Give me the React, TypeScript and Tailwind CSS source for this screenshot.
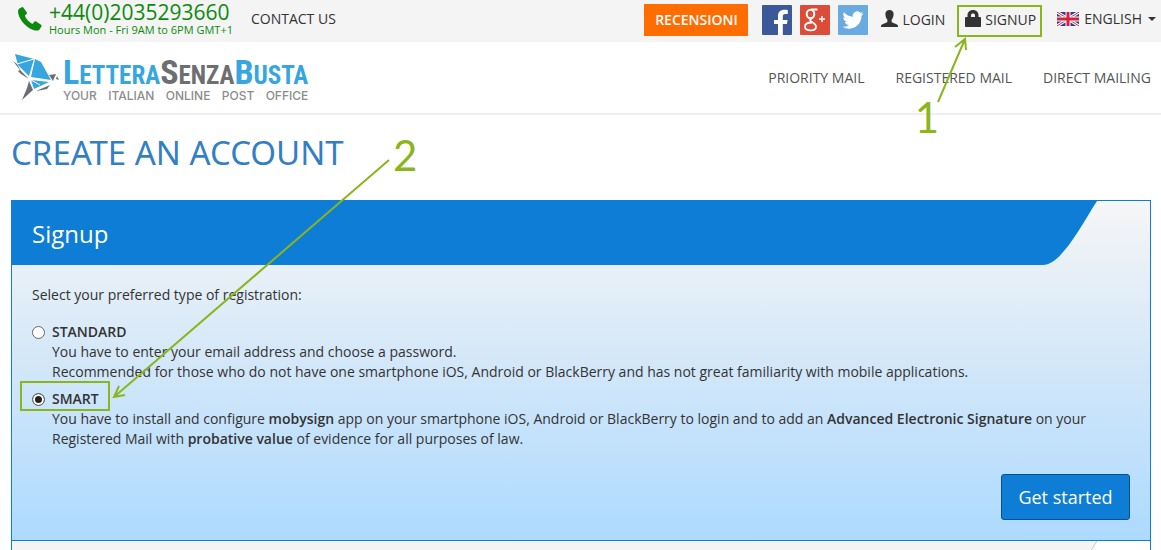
import type { ReactNode } from "react";

function PhoneIcon() {
  return (
    <svg viewBox="0 0 24 24" className="size-6" fill="#0d8a0d" aria-hidden="true">
      <path d="M3.800.2 1.400 1.400C.2 2.100-.2 4 .2 6.200c.7 3.700 2.900 7.600 6 10.800 3.300 3.300 7 5.600 10.600 6.400 2.300.5 4 .1 4.700-1l1.900-2.900c.4-.7.2-1.300-.4-1.700l-4.900-3.300c-.6-.4-1.200-.3-1.700.2l-2 2.200c-3.400-1.700-6.600-5.100-7.600-8.400l1.700-1.500c.5-.4.6-1 .4-1.600L5.600 1C5.200.3 4.500-.1 3.800.2Z" />
    </svg>
  );
}

function BirdLogo() {
  return (
    <svg viewBox="0 0 46 46" className="w-[46px] h-[46px] shrink-0" aria-hidden="true">
      <path fill="#6d6e71" d="M0 7 4 10 8 17 16 25 8 20 5 17 7 16ZM36 21 43 20 40 27 38 24ZM43 25 46 26 44 22ZM16 27 20 36 9 46 14 34ZM23 37 37 31 34 35 29 36Z" />
      <path fill="#37a5df" d="M2 0 21 5 16 22 5 11ZM22 5 28 8 38 26 18 23ZM18 26 36 28 21 35Z" />
      <path stroke="#fff" fill="none" d="M4 10 21 5M18 26 27 31" />
    </svg>
  );
}

function Flag() {
  return (
    <svg viewBox="0 0 22 14" className="w-[22px] h-[14px]" aria-hidden="true">
      <path fill="#26428b" d="M0 0h22v14H0z" />
      <path stroke="#fff" strokeWidth="3" d="m0 0 22 14M22 0 0 14" />
      <path stroke="#d4213d" strokeWidth="1" d="m0 0 22 14M22 0 0 14" />
      <path stroke="#fff" strokeWidth="5" d="M11 0v14M0 7h22" />
      <path stroke="#d4213d" strokeWidth="3" d="M11 0v14M0 7h22" />
    </svg>
  );
}

function TopBar() {
  return (
    <div className="relative h-[42px] bg-[#f4f4f4] flex items-start justify-between pl-[18px] pr-[5px]">
      <div className="flex">
        <span className="pt-[7px]">
          <PhoneIcon />
        </span>
        <div className="ml-[7px] text-[#0d8a0d]">
          <a href="tel:+442035293660" className="block text-[21px] leading-6">+44(0)2035293660</a>
          <p className="text-[11px] leading-3">Hours Mon - Fri 9AM to 6PM GMT+1</p>
        </div>
        <a href="#contact" className="ml-[18px] pt-[9px]">CONTACT US</a>
      </div>

      <div className="flex">
        <a href="#reviews" className="mt-1 h-8 w-[104px] bg-[#ff6c00] text-white font-semibold leading-8 text-center">
          RECENSIONI
        </a>
        <div className="ml-[14px] mt-[5px] flex gap-2">
          <a href="#facebook" aria-label="Facebook">
            <svg viewBox="0 0 30 30" className="size-[30px]">
              <rect width="30" height="30" rx="1" fill="#3b5998" />
              <path fill="#fff" d="M16 30V19h-4v-4h4v-4c0-4 2.500-6.200 6.200-6.200 1.700 0 3.100.1 3.600.2V9h-2.500c-2 0-2.500 1-2.500 2.400V15h4.800l-.7 4h-4.100v11Z" />
            </svg>
          </a>
          <a href="#google" aria-label="Google Plus">
            <svg viewBox="0 0 30 30" className="size-[30px]">
              <rect width="30" height="30" rx="1" fill="#dd4b39" />
              <g fill="none" stroke="#fff">
                <ellipse cx="10.500" cy="9" rx="3.800" ry="4.300" strokeWidth="2" />
                <path strokeWidth="1.800" d="M11 4.500h6.500M11.500 13.300c-2 1.700-1.500 2.500 0 3.400 2.600 1.500 4.500 2.600 4.500 4.700 0 2.600-2.500 4-5.500 4S5 24 5 21.600s2.500-4.100 7-4.100" />
                <path strokeWidth="1.500" d="M22 11v6M19 14h6" />
              </g>
            </svg>
          </a>
          <a href="#twitter" aria-label="Twitter">
            <svg viewBox="0 0 30 30" className="size-[30px]">
              <rect width="30" height="30" rx="1" fill="#69abe0" />
              <path
                fill="#fff"
                transform="translate(4.500 4.500) scale(.88)"
                d="M23.950 4.570a10 10 0 0 1-2.820.770 4.960 4.960 0 0 0 2.160-2.720c-.95.560-2 .960-3.130 1.180a4.920 4.920 0 0 0-8.380 4.480C7.690 8.090 4.070 6.130 1.640 3.160a4.820 4.820 0 0 0-.67 2.480c0 1.710.87 3.210 2.190 4.100a4.900 4.900 0 0 1-2.230-.620v.060a4.920 4.920 0 0 0 3.950 4.830 5 5 0 0 1-2.210.080 4.940 4.940 0 0 0 4.600 3.420A9.870 9.870 0 0 1 0 19.540a13.990 13.990 0 0 0 7.550 2.210c9.050 0 14-7.500 14-13.980 0-.21 0-.42-.02-.63a9.940 9.940 0 0 0 2.460-2.550Z"
              />
            </svg>
          </a>
        </div>
        <a href="#login" className="ml-[13px] mt-[10px] flex gap-1">
          <svg viewBox="0 0 17 17" className="size-[17px]" fill="#333" aria-hidden="true">
            <path d="M8.500 0C5.800 0 4.300 1.800 4.400 4.300c.1 2.300.8 4.200 2 5.400v1.700c0 .6-.3.900-.8 1.200l-4.100 1.700C.4 14.800 0 15.400 0 16.200v.8h17v-.8c0-.8-.4-1.400-1.500-1.900l-4.100-1.700c-.5-.3-.8-.6-.8-1.200V9.700c1.200-1.200 1.900-3.100 2-5.400C12.700 1.800 11.200 0 8.500 0Z" />
          </svg>
          <span>LOGIN</span>
        </a>
        <a href="#signup" className="ml-3 mt-[5px] h-8 w-[85px] border-2 border-[#8ab51c] pl-[6px] pt-[3px] flex gap-1">
          <svg viewBox="0 0 16 17" className="w-4 h-[17px]" fill="#333" aria-hidden="true">
            <path fillRule="evenodd" d="M2.500 7V5.200C2.500 2.200 4.800 0 8 0s5.500 2.200 5.500 5.200V7h1.300c.7 0 1.200.5 1.200 1.200V16c0 .6-.4 1-1 1H1c-.6 0-1-.4-1-1V8.200C0 7.500.5 7 1.200 7Zm3.500 0h4V5.200C10 4.200 9.300 3.500 8 3.500s-2 .7-2 1.700Z" />
          </svg>
          <span>SIGNUP</span>
        </a>
        <button type="button" className="ml-[15px] mt-[9px] h-5 flex items-center">
          <Flag />
          <span className="ml-[5px]">ENGLISH</span>
          <svg viewBox="0 0 8 4" className="ml-[6px] w-2 h-1" fill="#333" aria-hidden="true">
            <path d="M0 0h8L4 4Z" />
          </svg>
        </button>
      </div>

      {/* Step 1 */}
      <svg viewBox="0 0 40 66" className="absolute top-[37px] right-[190px] w-10 h-[66px] pointer-events-none" fill="none" stroke="#8ab51c" strokeWidth="2" aria-hidden="true">
        <path d="M7 65 34 2M24 10 34 2 35 13" />
      </svg>
      <span className="absolute top-[92px] right-[222px] font-[Lato] text-[42px] leading-[50px] text-[#8ab51c]">1</span>
    </div>
  );
}

function Header() {
  return (
    <header className="h-[73px] border-b-2 border-[#eee] flex items-start justify-between px-[10px]">
      <a href="#home" className="mt-3 ml-[3px] flex gap-1">
        <BirdLogo />
        <span className="pt-1">
          <span className="block whitespace-nowrap leading-7 font-bold font-['Roboto_Condensed','Liberation_Sans_Narrow',sans-serif] text-[25px] text-[#37a5df]">
            <span className="text-[34px]">L</span>ETTERA
            <span className="text-[#6d6e71]"><span className="text-[34px]">S</span>ENZA</span>
            <span className="text-[34px]">B</span>USTA
          </span>
          <span className="flex justify-between font-medium font-[Inter] text-xs leading-3 text-[#8c8c8c]">
            <span>YOUR</span> <span>ITALIAN</span> <span>ONLINE</span> <span>POST</span> <span>OFFICE</span>
          </span>
        </span>
      </a>
      <nav className="mt-[26px] flex gap-[31px] text-[#555]">
        <a href="#priority">PRIORITY MAIL</a>
        <a href="#registered">REGISTERED MAIL</a>
        <a href="#direct">DIRECT MAILING</a>
      </nav>
    </header>
  );
}

type OptionProps = { id: string; label: string; checked?: boolean; children: ReactNode };

function Option({ id, label, checked, children }: OptionProps) {
  return (
    <div className="flex items-start gap-[7px]">
      <input
        type="radio"
        id={id}
        name="registration"
        defaultChecked={checked}
        className="appearance-none mt-1 size-[13px] shrink-0 rounded-full border border-[#666] bg-white checked:bg-[#222] checked:shadow-[inset_0_0_0_2px_#fff]"
      />
      <div>
        <label htmlFor={id} className="block font-semibold">{label}</label>
        {children}
      </div>
    </div>
  );
}

function SignupPanel() {
  return (
    <section className="border border-[#0d7dd5] bg-linear-to-b from-[#f6f6f6] via-[#d5e8f8] via-45% to-[#addaff]">
      <div className="flex h-16 text-white">
        <h2 className="flex-1 bg-[#0d7dd5] pl-5 text-2xl leading-[66px]">Signup</h2>
        <svg viewBox="0 0 54 64" className="w-[54px] h-16 mr-[53px]" fill="#0d7dd5" aria-hidden="true">
          <path d="M0 0h54C38 25 18 64 0 64Z" />
        </svg>
      </div>
      <form className="relative px-5 pt-5 pb-5">
        <p>Select your preferred type of registration:</p>
        <div className="mt-[17px] flex flex-col gap-[7px]">
          <Option id="standard" label="STANDARD">
            <p>You have to enter your email address and choose a password.</p>
            <p>Recommended for those who do not have one smartphone iOS, Android or BlackBerry and has not great familiarity with mobile applications.</p>
          </Option>
          <Option id="smart" label="SMART" checked>
            <p>
              You have to install and configure <b className="font-semibold">mobysign</b> app on your smartphone iOS, Android or BlackBerry to login and to add an{" "}
              <b className="font-semibold">Advanced Electronic Signature</b> on your Registered Mail with{" "}
              <b className="font-semibold">probative value</b> of evidence for all purposes of law.
            </p>
          </Option>
        </div>
        <div className="mt-[25px] flex justify-end">
          <button type="button" className="h-[46px] w-[129px] rounded-[3px] border border-[#0a4f94] bg-[#0d7dd5] text-lg text-white">
            Get started
          </button>
        </div>
        <span className="absolute left-2 top-[116px] h-[30px] w-[90px] border-2 border-[#8ab51c] pointer-events-none" />
      </form>
    </section>
  );
}

export default function App() {
  return (
    <div className="h-screen overflow-hidden bg-white font-['Open_Sans',sans-serif] text-sm leading-5 text-[#333]">
      <TopBar />
      <Header />
      <main className="relative pl-[11px] pr-[10px]">
        <h1 className="pt-[18px] font-['Noto_Sans','Open_Sans',sans-serif] text-[33px] leading-10 text-[#337fc3]">CREATE AN ACCOUNT</h1>
        <div className="mt-[27px]">
          <SignupPanel />
          <div className="h-16 border-x border-[#0d7dd5] flex">
            <span className="flex-1 bg-[#f4f4f4]" />
            <svg viewBox="0 0 54 64" className="w-[54px] h-16 mr-[53px]" fill="#f4f4f4" stroke="#ccc" aria-hidden="true">
              <path stroke="none" d="M0 0h54C38 25 18 64 0 64Z" />
              <path fill="none" d="M54 0C38 25 18 64 0 64" />
            </svg>
          </div>
        </div>
        {/* Step 2 */}
        <svg viewBox="0 0 280 244" className="absolute left-[112px] top-[43px] w-[280px] h-[244px] pointer-events-none" fill="none" stroke="#8ab51c" strokeWidth="2" aria-hidden="true">
          <path d="M277 2 2 239M7 228 2 239 13 237" />
        </svg>
        <span className="absolute left-[393px] top-[15px] font-[Lato] text-[42px] leading-[50px] text-[#8ab51c]">2</span>
      </main>
    </div>
  );
}
